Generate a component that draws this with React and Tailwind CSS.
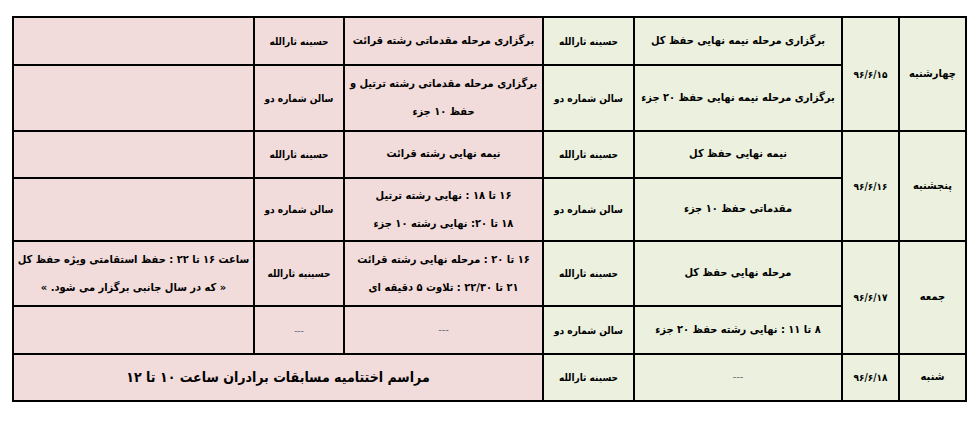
const green = 'bg-[#ebf1de]';
const pink = 'bg-[#f2dcdb]';
const cell = 'border-2 border-black text-center align-middle px-0 whitespace-nowrap overflow-hidden';

const days = [
  {
    day: 'چهارشنبه',
    date: '۹۶/۶/۱۵',
    rows: [
      {
        h: 'h-[48px]',
        prog: 'برگزاری مرحله نیمه نهایی حفظ کل',
        place: 'حسینه ثارالله',
        prog2: 'برگزاری مرحله مقدماتی رشته قرائت',
        place2: 'حسینه ثارالله',
        note: '',
      },
      {
        h: 'h-[66px]',
        prog: 'برگزاری مرحله نیمه نهایی حفظ ۲۰ جزء',
        place: 'سالن شماره دو',
        prog2: ['برگزاری مرحله مقدماتی رشته ترتیل و', 'حفظ ۱۰ جزء'],
        place2: 'سالن شماره دو',
        note: '',
      },
    ],
  },
  {
    day: 'پنجشنبه',
    date: '۹۶/۶/۱۶',
    rows: [
      {
        h: 'h-[47px]',
        prog: 'نیمه نهایی حفظ کل',
        place: 'حسینه ثارالله',
        prog2: 'نیمه نهایی رشته قرائت',
        place2: 'حسینه ثارالله',
        note: '',
      },
      {
        h: 'h-[63px]',
        prog: 'مقدماتی حفظ ۱۰ جزء',
        place: 'سالن شماره دو',
        prog2: ['۱۶ تا ۱۸ : نهایی رشته ترتیل', '۱۸ تا ۲۰: نهایی رشته ۱۰ جزء'],
        place2: 'سالن شماره دو',
        note: '',
      },
    ],
  },
  {
    day: 'جمعه',
    date: '۹۶/۶/۱۷',
    rows: [
      {
        h: 'h-[65px]',
        prog: 'مرحله نهایی حفظ کل',
        place: 'حسینه ثارالله',
        prog2: ['۱۶ تا ۲۰ : مرحله نهایی رشته قرائت', '۲۱ تا ۲۲/۳۰ : تلاوت ۵ دقیقه ای'],
        place2: 'حسینیه ثارالله',
        note: ['ساعت ۱۶ تا ۲۲ : حفظ استقامتی ویژه حفظ کل', '« که در سال جانبی برگزار می شود. »'],
      },
      {
        h: 'h-[48px]',
        prog: '۸ تا ۱۱ : نهایی رشته حفظ ۲۰ جزء',
        place: 'سالن شماره دو',
        prog2: '---',
        place2: '---',
        note: '',
      },
    ],
  },
];

const Text = ({ value }) => {
  if (Array.isArray(value)) {
    return (
      <div className="leading-[28px]">
        {value.map((line, i) => (
          <div key={i}>{line}</div>
        ))}
      </div>
    );
  }
  if (value === '---') return <span className="font-normal text-gray-500">---</span>;
  return value;
};

export default function App() {
  return (
    <div className="w-[973px] h-[430px] bg-white pt-[16px] pl-[12px]">
      <table
        dir="rtl"
        className="w-[953px] table-fixed border-collapse text-[11px] font-bold text-black"
        style={{ fontFamily: '"DejaVu Sans Condensed", "DejaVu Sans", sans-serif' }}
      >
        <colgroup>
          <col className="w-[67px]" />
          <col className="w-[57px]" />
          <col className="w-[208px]" />
          <col className="w-[91px]" />
          <col className="w-[199px]" />
          <col className="w-[90px]" />
          <col className="w-[241px]" />
        </colgroup>
        <tbody>
          {days.map((d) =>
            d.rows.map((r, i) => (
              <tr key={d.day + i} className={r.h}>
                {i === 0 && (
                  <>
                    <td rowSpan={2} className={`${cell} ${green}`}>{d.day}</td>
                    <td rowSpan={2} className={`${cell} ${green} text-[10px]`}>{d.date}</td>
                  </>
                )}
                <td className={`${cell} ${green}`}><Text value={r.prog} /></td>
                <td className={`${cell} ${green} text-[10px]`}><Text value={r.place} /></td>
                <td className={`${cell} ${pink}`}><Text value={r.prog2} /></td>
                <td className={`${cell} ${pink} text-[10px]`}><Text value={r.place2} /></td>
                <td className={`${cell} ${pink}`}><Text value={r.note} /></td>
              </tr>
            ))
          )}
          <tr className="h-[47px]">
            <td className={`${cell} ${green}`}>شنبه</td>
            <td className={`${cell} ${green} text-[10px]`}>۹۶/۶/۱۸</td>
            <td className={`${cell} ${green}`}><Text value="---" /></td>
            <td className={`${cell} ${green} text-[10px]`}>حسینه ثارالله</td>
            <td colSpan={3} className={`${cell} ${pink} text-[14px]`}>
              مراسم اختتامیه مسابقات برادران ساعت ۱۰ تا ۱۲
            </td>
          </tr>
        </tbody>
      </table>
    </div>
  );
}
